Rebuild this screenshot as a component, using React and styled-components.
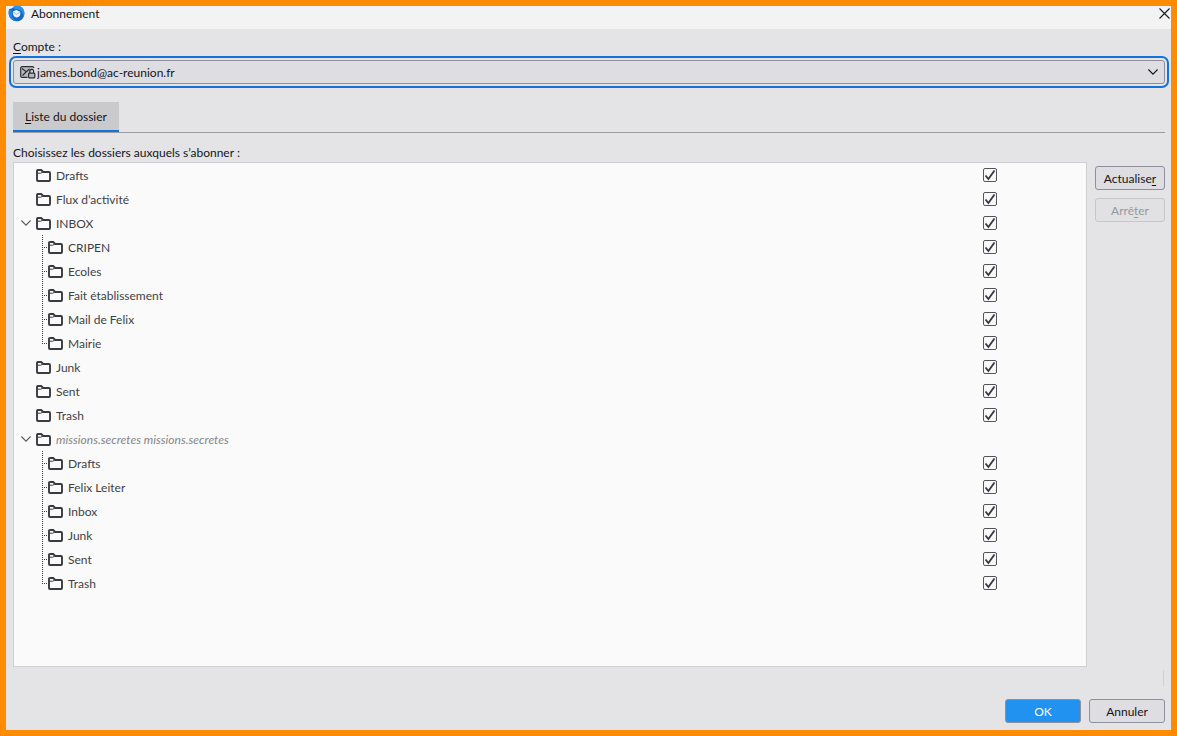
import React from 'react';
import styled, {createGlobalStyle} from 'styled-components';

const folders = [
    {name: 'Drafts'},
    {name: 'Flux d’activité'},
    {
        name: 'INBOX',
        children: ['CRIPEN', 'Ecoles', 'Fait établissement', 'Mail de Felix', 'Mairie'],
    },
    {name: 'Junk'},
    {name: 'Sent'},
    {name: 'Trash'},
    {
        name: 'missions.secretes missions.secretes',
        virtual: true,
        children: ['Drafts', 'Felix Leiter', 'Inbox', 'Junk', 'Sent', 'Trash'],
    },
]

function AppLogo() {
    return (
        <svg width="17" height="17" viewBox="0 0 17 17" aria-hidden="true">
            <path d="M1.200 4C.2 7 .3 11 2.600 13.600 5.500 17 11 17.200 14 14.300 17.200 11.200 17.200 6 14.500 3 12 .5 8 .2 5.600 2L3.600 3.600Z" fill="#1467c8"/>
            <path d="M5 2C7.500.1 12 .3 14.500 3 16.600 5.600 16.700 9 15.500 11.500 15.500 7.500 12.500 4.300 8.500 4.300 7 4.300 5.500 3.500 5 2Z" fill="#2b93ea"/>
            <path d="M1.200 4C.2 7 .6 11 3 13.600 5 15.600 7.500 16.200 9 16 5.500 14.600 3.800 12 4.200 8.500L3.600 5.500Z" fill="#1f86e6"/>
            <path d="M5 6.200 8.500 5 12 6.800C13.200 9.500 11.500 12.400 8.800 12.400 6.200 12.400 4.300 9.800 5 6.200Z" fill="#eaf5fe"/>
            <path d="M5.200 7 8.600 9.300 11.800 7.200" fill="none" stroke="#8fc2f2"/>
        </svg>
    )
}

function CloseIcon() {
    return (
        <svg width="11" height="11" viewBox="0 0 11 11" aria-hidden="true">
            <path d="M.5.5 10.500 10.500M10.500.5.5 10.500" fill="none" stroke="#1b1b1b" strokeWidth="1.1"/>
        </svg>
    )
}

function MailIcon() {
    return (
        <svg width="16" height="14" viewBox="0 0 16 14" aria-hidden="true">
            <path d="M7.500 12.300H2A1.300 1.300 0 0 1 .7 11V3A1.300 1.300 0 0 1 2 1.700H12.500A1.300 1.300 0 0 1 13.800 3" fill="#b9b9c0" stroke="#2c2c33" strokeWidth="1.2"/>
            <path d="M2 3.500 6.300 6.800 2.500 10.500M6.300 6.800 9.500 4" fill="none" stroke="#2c2c33" strokeWidth="1.2"/>
            <path d="M9.800 8V6.200A1.900 1.900 0 0 1 13.600 6.200V8" fill="none" stroke="#2c2c33" strokeWidth="1.2"/>
            <rect x="8.600" y="8.100" width="6.200" height="4.800" rx="1" fill="#b9b9c0" stroke="#2c2c33" strokeWidth="1.2"/>
        </svg>
    )
}

function FolderIcon() {
    return (
        <svg width="15" height="13" viewBox="0 0 15 13" aria-hidden="true">
            <path d="M1 3.200V1.900A.9.9 0 0 1 1.900 1H5.200L7.200 3H13A1 1 0 0 1 14 4V11A1 1 0 0 1 13 12H2A1 1 0 0 1 1 11V3.200" fill="none" stroke="#3a3a42" strokeWidth="1.9"/>
            <path d="M1 4.200H4.800L7 3" fill="none" stroke="#3a3a42"/>
        </svg>
    )
}

function Chevron() {
    return (
        <svg width="10" height="6" viewBox="0 0 10 6" aria-hidden="true">
            <path d="M.4.500 5 5.200 9.600.500" fill="none" stroke="currentColor" strokeWidth="1.1"/>
        </svg>
    )
}

// dotted branch in front of a child folder
function Branch({last}) {
    return (
        <svg width="6" height="24" viewBox="0 0 6 24" shapeRendering="crispEdges" aria-hidden="true">
            <path d={last ? 'M.5 0V13' : 'M.5 0V24'} stroke="#3a3a42" strokeDasharray="1 1"/>
            <path d="M2 12.500H6" stroke="#3a3a42" strokeDasharray="1 1"/>
        </svg>
    )
}

function FolderRow({id, name, child, last, open, virtual}) {
    return (
        <Row>
            <Indent $child={child}>
                {open && <Twisty type="button" aria-label={`Réduire ${name}`}><Chevron/></Twisty>}
                {child && <Branch last={last}/>}
            </Indent>
            <FolderLabel as={virtual ? 'span' : 'label'} htmlFor={virtual ? undefined : id} $virtual={virtual}>
                <FolderIcon/>
                <FolderName>{name}</FolderName>
            </FolderLabel>
            <CheckCell>
                {!virtual && <Check type="checkbox" id={id} defaultChecked/>}
            </CheckCell>
        </Row>
    )
}

function App() {
    return (
        <>
            <GlobalStyle/>
            <Window>
                <TitleBar>
                    <AppLogo/>
                    <Title>Abonnement</Title>
                    <CloseButton type="button" aria-label="Fermer"><CloseIcon/></CloseButton>
                </TitleBar>
                <Content>
                    <FieldLabel htmlFor="account"><u>C</u>ompte :</FieldLabel>
                    <AccountField>
                        <MailIcon/>
                        <AccountSelect id="account">
                            <option>james.bond@ac-reunion.fr</option>
                        </AccountSelect>
                        <Chevron/>
                    </AccountField>
                    <Tabs role="tablist">
                        <Tab type="button" role="tab" aria-selected="true"><span><u>L</u>iste du dossier</span></Tab>
                    </Tabs>
                    <FieldLabel as="p">Choisissez les dossiers auxquels s’abonner :</FieldLabel>
                    <Panel>
                        <Tree>
                            {folders.map((folder, i) => (
                                <li key={folder.name}>
                                    <FolderRow
                                        id={`folder-${i}`}
                                        name={folder.name}
                                        open={!!folder.children}
                                        virtual={folder.virtual}
                                    />
                                    {folder.children && (
                                        <ul>
                                            {folder.children.map((name, j) => (
                                                <li key={name}>
                                                    <FolderRow
                                                        id={`folder-${i}-${j}`}
                                                        name={name}
                                                        child
                                                        last={j === folder.children.length - 1}
                                                    />
                                                </li>
                                            ))}
                                        </ul>
                                    )}
                                </li>
                            ))}
                        </Tree>
                        <Actions>
                            <Button type="button"><span>Actualise<u>r</u></span></Button>
                            <Button type="button" disabled><span>Arrê<u>t</u>er</span></Button>
                        </Actions>
                    </Panel>
                    <Status><StatusMark/></Status>
                    <Footer>
                        <Button type="button" $primary>OK</Button>
                        <Button type="button">Annuler</Button>
                    </Footer>
                </Content>
            </Window>
        </>
    )
}

const GlobalStyle = createGlobalStyle`
    *{
        box-sizing: border-box;
    }
    body{
        margin: 0;
        background: #ff8c00;
        color: #15141a;
        font-family: Lato, "Open Sans", sans-serif;
        font-size: 12px;
        line-height: 16px;
    }
    button, select, input{
        font: inherit;
        color: inherit;
        margin: 0;
    }
    ul, p{
        margin: 0;
        padding: 0;
        list-style: none;
    }
    svg{
        display: block;
        flex: none;
    }
    u{
        text-underline-offset: 2px;
    }
`
const Window = styled.div`
    display: flex;
    flex-direction: column;
    min-height: 100vh;
    border: 6px solid #ff8c00;
    background: #e4e4e6;
`
const TitleBar = styled.header`
    display: flex;
    align-items: center;
    height: 23px;
    padding: 0 1px 8px 2px;
    background: #f3f3f3;
`
const Title = styled.h1`
    flex: 1;
    margin: 0 0 0 6px;
    font-size: 12px;
    font-weight: 400;
`
const CloseButton = styled.button`
    padding: 0;
    border: 0;
    background: none;
`
const Content = styled.main`
    display: flex;
    flex: 1;
    flex-direction: column;
    padding: 10px 6px 7px 7px;
`
const FieldLabel = styled.label`
    align-self: flex-start;
`
const AccountField = styled.div`
    display: flex;
    align-items: center;
    height: 24px;
    margin-top: 5px;
    padding: 0 6px;
    border: 1px solid #8f8f9d;
    border-radius: 3px;
    outline: 2px solid #1373d9;
    outline-offset: 2px;
    background: #dddde2;
`
const AccountSelect = styled.select`
    flex: 1;
    min-width: 0;
    padding: 2px 0 0 1px;
    border: 0;
    outline: 0;
    background: none;
    appearance: none;
`
const Tabs = styled.div`
    display: flex;
    margin-top: 18px;
    margin-bottom: 12px;
    border-bottom: 1px solid #9c9ca0;
`
const Tab = styled.button`
    height: 30px;
    padding: 2px 12px 0;
    border: 0;
    border-bottom: 2px solid #1373d9;
    background: #cacacc;
`
const Panel = styled.section`
    display: flex;
    flex: 1;
    gap: 8px;
    margin-top: 1px;
`
const Tree = styled.ul`
    flex: 1;
    border: 1px solid #cfcfd4;
    background: #fafafa;
`
const Row = styled.div`
    display: flex;
    align-items: center;
    height: 24px;
    color: #3f3f46;
`
const Indent = styled.div`
    display: flex;
    align-items: center;
    width: ${({$child}) => $child ? '34px' : '22px'};
    padding-left: ${({$child}) => $child ? '28px' : '7px'};
`
const Twisty = styled.button`
    padding: 0;
    border: 0;
    background: none;
    color: #5b5b62;
`
const FolderLabel = styled.label`
    display: flex;
    flex: 1;
    align-items: center;
    gap: 5px;
    ${({$virtual}) => $virtual && 'color: #858589; font-style: italic;'}
`
const FolderName = styled.span`
    padding-top: 2px;
`
const CheckCell = styled.div`
    display: flex;
    width: 103px;
`
const Check = styled.input`
    width: 14px;
    height: 14px;
    appearance: none;
    border: 1px solid #55555c;
    border-radius: 2px;
    background: #fafafa;
    &:checked{
        background: url("data:image/svg+xml,%3Csvg xmlns='http://www.w3.org/2000/svg' viewBox='0 0 12 12'%3E%3Cpath d='M1.500 6.500 4.400 10 10.500 1.500' fill='none' stroke='%233a3a42' stroke-width='1.900'/%3E%3C/svg%3E") center / 12px 12px no-repeat;
    }
`
const Actions = styled.div`
    display: flex;
    flex-direction: column;
    gap: 8px;
    width: 70px;
    padding-top: 4px;
`
const Button = styled.button`
    height: 24px;
    padding: 2px 0 0;
    border: 1px solid #8f8f9d;
    border-radius: 3px;
    background: ${({$primary}) => $primary ? '#2292f0' : '#dddde2'};
    color: ${({$primary}) => $primary ? '#fff' : '#15141a'};
    &:disabled{
        border-color: #c6c6cc;
        background: #e1e1e4;
        color: #98989d;
    }
`
const Status = styled.div`
    display: flex;
    justify-content: flex-end;
    padding: 3px 1px 13px;
`
const StatusMark = styled.div`
    width: 1px;
    height: 16px;
    background: #cfcfd4;
`
const Footer = styled.footer`
    display: flex;
    justify-content: flex-end;
    gap: 8px;
    ${Button}{
        min-width: 76px;
    }
`

export default App;
